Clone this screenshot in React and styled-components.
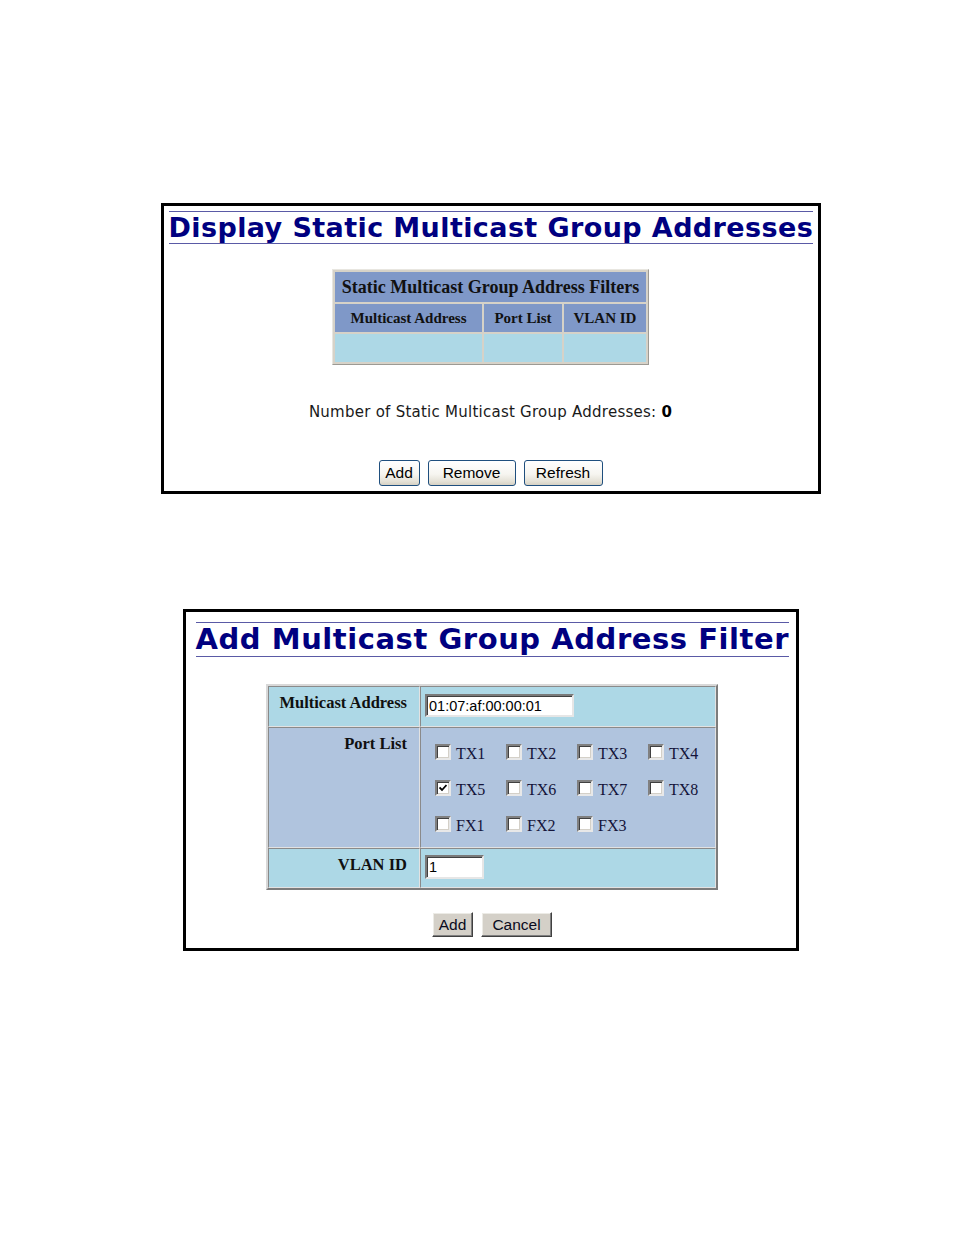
import React from "react";
import styled, { createGlobalStyle } from "styled-components";

const GlobalStyle = createGlobalStyle`
  html, body { margin: 0; padding: 0; background: #fff; }
  * { box-sizing: border-box; }
`;

const Page = styled.main`
  width: 100%;
  display: flex;
  flex-direction: column;
  align-items: center;
  padding: 203px 0 60px 27px;
`;

const Panel = styled.section`
  width: ${(p) => p.$width}px;
  border: 3px solid #000;
  padding: ${(p) => p.$pad};
  margin-bottom: ${(p) => p.$mb || 0}px;
  display: flex;
  flex-direction: column;
  align-items: center;
  background: #fff;
`;

const Title = styled.h1`
  align-self: stretch;
  margin: 0;
  border-top: 1px solid #5a5aa6;
  border-bottom: 1px solid #5a5aa6;
  font-family: "DejaVu Sans", Verdana, sans-serif;
  font-weight: bold;
  font-size: ${(p) => p.$size}px;
  letter-spacing: ${(p) => p.$ls}px;
  line-height: ${(p) => p.$lh}px;
  color: #000080;
  white-space: nowrap;
`;

const ListTable = styled.table`
  margin-top: 25px;
  border-collapse: separate;
  border-spacing: 2px;
  table-layout: fixed;
  background: #d6d2c8;
  border: 1px solid;
  border-color: #e8e6e0 #9c9a94 #9c9a94 #e8e6e0;
  font-family: "Liberation Serif", "Times New Roman", serif;
  color: #111;
`;

const Col = styled.col`
  width: ${(p) => p.$w}px;
`;

const CaptionCell = styled.th`
  height: 30px;
  padding: 0;
  background: #7f98c8;
  font-size: 18px;
  font-weight: bold;
  text-align: center;
  white-space: nowrap;
`;

const HeadCell = styled.th`
  height: 28px;
  padding: 0;
  background: #7f98c8;
  font-size: 15px;
  font-weight: bold;
  text-align: center;
  white-space: nowrap;
`;

const DataCell = styled.td`
  height: 28px;
  padding: 0;
  background: #add8e6;
`;

const CountText = styled.p`
  margin: 37px 0 0;
  font-family: "DejaVu Sans", Verdana, sans-serif;
  font-size: 15px;
  letter-spacing: 0.25px;
  line-height: 20px;
  color: #1a1a1a;
  b { font-weight: bold; color: #000; }
`;

const ButtonRow = styled.div`
  display: flex;
  gap: 8px;
  margin-top: ${(p) => p.$mt}px;
`;

const XPButton = styled.button`
  width: ${(p) => p.$w}px;
  height: 26px;
  padding: 0;
  border: 1px solid #1f4f7e;
  border-radius: 3px;
  background: linear-gradient(180deg, #ffffff 0%, #f6f5f0 55%, #e4e1d6 85%, #d6d1c4 100%);
  font-family: "Liberation Sans", Arial, sans-serif;
  font-size: 15.5px;
  color: #000;
`;

const ClassicButton = styled.button`
  width: ${(p) => p.$w}px;
  height: 25px;
  padding: 0;
  border: 1px solid;
  border-color: #ffffff #404040 #404040 #ffffff;
  box-shadow: inset -1px -1px #808080, inset 1px 1px #ecebe6;
  background: #d4d0c8;
  font-family: "Liberation Sans", Arial, sans-serif;
  font-size: 15.5px;
  color: #0a0a20;
`;

const FormTable = styled.table`
  margin-top: 27px;
  width: 452px;
  border-collapse: separate;
  border-spacing: 0;
  table-layout: fixed;
  border: 2px solid;
  border-color: #d8d8d8 #7c7c7c #7c7c7c #d8d8d8;
`;

const LabelCell = styled.th`
  width: 152px;
  padding: 6px 12px 0 0;
  vertical-align: top;
  text-align: right;
  border: 1px solid;
  border-color: #8a8a8a #e2e2e2 #e2e2e2 #8a8a8a;
  background: ${(p) => p.$bg};
  font-family: "Liberation Serif", "Times New Roman", serif;
  font-size: 16.5px;
  font-weight: bold;
  line-height: 19px;
  color: #101010;
  white-space: nowrap;
`;

const ValueCell = styled.td`
  width: 296px;
  padding: ${(p) => p.$pad || "0"};
  vertical-align: top;
  border: 1px solid;
  border-color: #8a8a8a #e2e2e2 #e2e2e2 #8a8a8a;
  background: ${(p) => p.$bg};
`;

const TextInput = styled.input`
  display: block;
  width: ${(p) => p.$w}px;
  height: ${(p) => p.$h}px;
  margin: 0;
  padding: 0 2px;
  border: 2px solid;
  border-color: #7a7a7a #e6e6e6 #e6e6e6 #7a7a7a;
  box-shadow: inset 1px 1px #404040;
  background: #fff;
  font-family: "Liberation Sans", Arial, sans-serif;
  font-size: 14.5px;
  color: #000;
  outline: none;
`;

const CheckGrid = styled.div`
  display: grid;
  grid-template-columns: repeat(4, 71px);
  row-gap: 20px;
  padding: 16px 0 15px 14px;
`;

const CheckItem = styled.label`
  display: flex;
  align-items: flex-start;
  gap: 5px;
  height: 16px;
`;

const CheckBox = styled.span`
  flex: none;
  width: 16px;
  height: 16px;
  border: 2px solid;
  border-color: #808080 #e8e8e8 #e8e8e8 #808080;
  box-shadow: inset 1px 1px #404040, inset -1px -1px #d4d0c8;
  background: #fff;
  display: flex;
  align-items: center;
  justify-content: center;
`;

const CheckText = styled.span`
  margin-top: 2px;
  font-family: "Liberation Serif", "Times New Roman", serif;
  font-size: 16px;
  line-height: 16px;
  color: #14143a;
`;

const ports = ["TX1", "TX2", "TX3", "TX4", "TX5", "TX6", "TX7", "TX8", "FX1", "FX2", "FX3"];

function Check({ label, checked }) {
  return (
    <CheckItem>
      <CheckBox>
        {checked && (
          <svg width="8" height="8" viewBox="0 0 8 8">
            <path d="M0.5 3.5 L3 6 L7.5 1" fill="none" stroke="#000" strokeWidth="1.8" />
          </svg>
        )}
      </CheckBox>
      <CheckText>{label}</CheckText>
    </CheckItem>
  );
}

export default function App() {
  return (
    <>
      <GlobalStyle />
      <Page>
        <Panel $width={660} $pad="5px 5px 5px 5px" $mb={115}>
          <Title $size={27} $ls={0.4} $lh={31}>Display Static Multicast Group Addresses</Title>
          <ListTable>
            <colgroup>
              <Col $w={147} />
              <Col $w={78} />
              <Col $w={82} />
            </colgroup>
            <tbody>
              <tr>
                <CaptionCell colSpan={3}>Static Multicast Group Address Filters</CaptionCell>
              </tr>
              <tr>
                <HeadCell>Multicast Address</HeadCell>
                <HeadCell>Port List</HeadCell>
                <HeadCell>VLAN ID</HeadCell>
              </tr>
              <tr>
                <DataCell />
                <DataCell />
                <DataCell />
              </tr>
            </tbody>
          </ListTable>
          <CountText>
            Number of Static Multicast Group Addresses: <b>0</b>
          </CountText>
          <ButtonRow $mt={38}>
            <XPButton $w={41}>Add</XPButton>
            <XPButton $w={88}>Remove</XPButton>
            <XPButton $w={79}>Refresh</XPButton>
          </ButtonRow>
        </Panel>

        <Panel $width={616} $pad="10px 7px 11px 10px">
          <Title $size={29} $ls={0.55} $lh={33}>Add Multicast Group Address Filter</Title>
          <FormTable>
            <tbody>
              <tr>
                <LabelCell $bg="#add8e6">Multicast Address</LabelCell>
                <ValueCell $bg="#add8e6" $pad="7px 0 9px 4px">
                  <TextInput $w={149} $h={23} defaultValue="01:07:af:00:00:01" />
                </ValueCell>
              </tr>
              <tr>
                <LabelCell $bg="#b0c4de">Port List</LabelCell>
                <ValueCell $bg="#b0c4de">
                  <CheckGrid>
                    {ports.map((p) => (
                      <Check key={p} label={p} checked={p === "TX5"} />
                    ))}
                  </CheckGrid>
                </ValueCell>
              </tr>
              <tr>
                <LabelCell $bg="#add8e6">VLAN ID</LabelCell>
                <ValueCell $bg="#add8e6" $pad="6px 0 8px 4px">
                  <TextInput $w={59} $h={24} defaultValue="1" />
                </ValueCell>
              </tr>
            </tbody>
          </FormTable>
          <ButtonRow $mt={22}>
            <ClassicButton $w={41}>Add</ClassicButton>
            <ClassicButton $w={71}>Cancel</ClassicButton>
          </ButtonRow>
        </Panel>
      </Page>
    </>
  );
}
